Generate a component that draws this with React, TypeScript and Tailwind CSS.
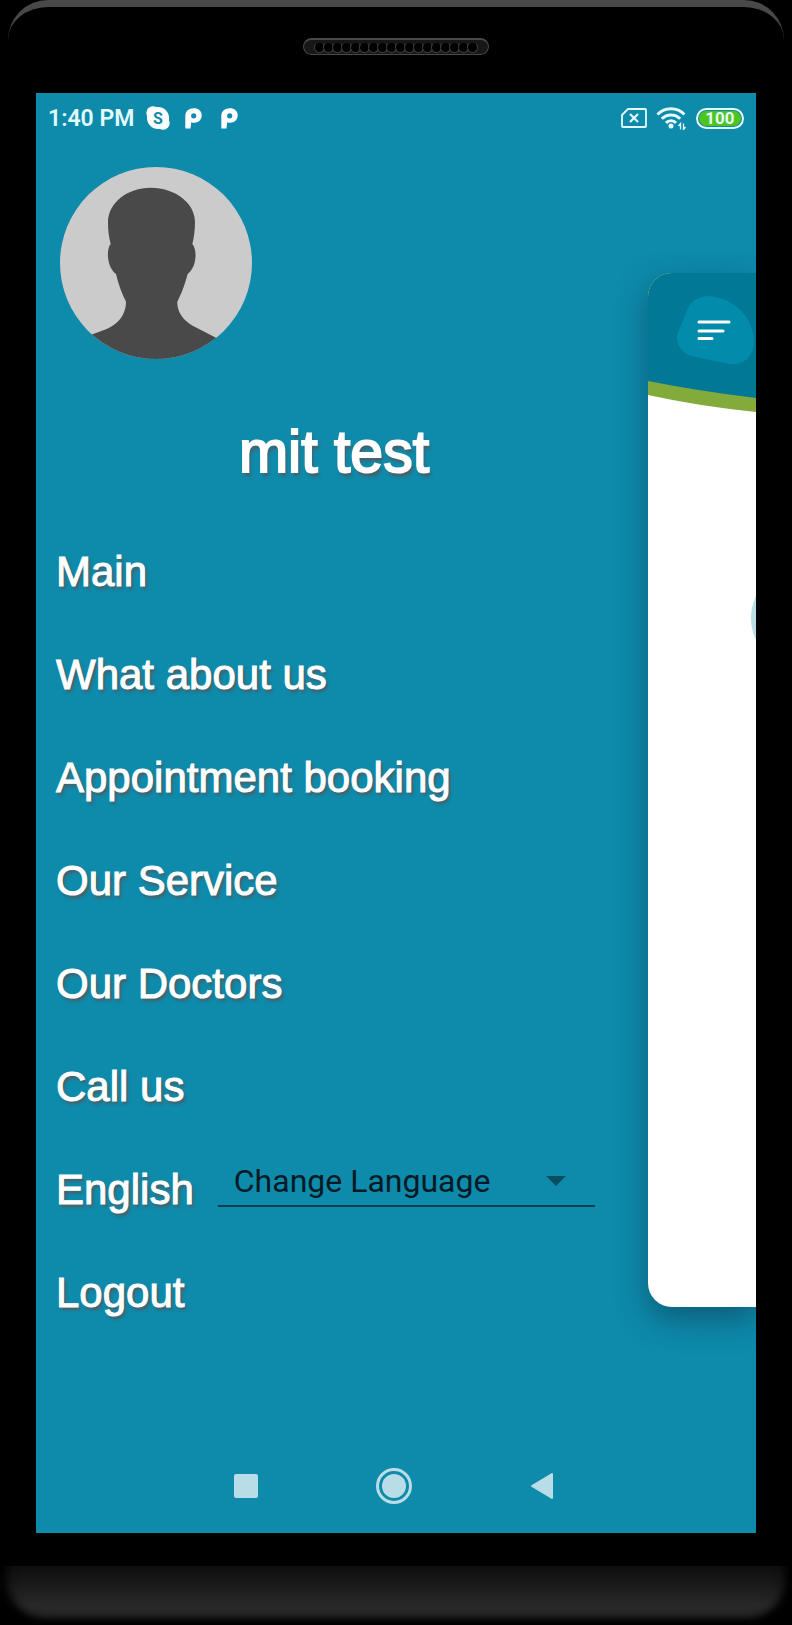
import { useState } from "react";

const MENU_TOP = [
  "Main",
  "What about us",
  "Appointment booking",
  "Our Service",
  "Our Doctors",
  "Call us",
];

const HOLES = Array.from({ length: 18 }, (_, i) => i);

const MENU_TEXT =
  "font-['Liberation_Sans',sans-serif] text-[42px] leading-[48px] text-white whitespace-nowrap [-webkit-text-stroke:1px_white] [text-shadow:2px_3px_3px_rgba(95,80,80,0.8)]";

function Speaker() {
  return (
    <div className="flex h-[17px] w-[186px] items-center justify-center rounded-full border border-t-2 border-[#484848] bg-[#171717]">
      {HOLES.map((i) => (
        <span key={i} className="-mx-px size-[11px] shrink-0 rounded-full border border-[#3c3c3c] border-t-[#1a1a1a] bg-black" />
      ))}
    </div>
  );
}

function SkypeIcon() {
  return (
    <svg viewBox="0 0 24 24" className="size-6" aria-hidden="true">
      <g fill="#fff">
        <circle cx="12" cy="12" r="11" />
        <circle cx="7" cy="7" r="6.700" />
        <circle cx="17" cy="17" r="6.700" />
      </g>
      <text x="12" y="17.500" textAnchor="middle" fill="#0e8aab" className="font-[Roboto,sans-serif] text-[16px] font-bold">
        S
      </text>
    </svg>
  );
}

function ParkingIcon() {
  return (
    <svg viewBox="0 0 17 21" className="h-[21px] w-[17px]" fill="none" aria-hidden="true">
      <path
        fill="#fff"
        fillRule="evenodd"
        d="M0.300 20.500V8.500C.3 3 4 .3 8.700.3c4.800 0 8 2.700 8 7 0 4.500-3.200 7.500-7.500 7.500-1.200 0-2.200-.2-3-.6L5.500 20.500ZM8.700 5.200a2.600 2.600 0 1 0 0 5.200 2.600 2.600 0 0 0 0-5.200Z"
      />
    </svg>
  );
}

function StatusBar() {
  return (
    <div className="flex h-[50px] items-center justify-between px-3 text-[#e3fbff]">
      <div className="flex items-center">
        <span className="w-[98px] pt-0.5 font-[Roboto,sans-serif] text-[23px] leading-7 font-semibold whitespace-nowrap">1:40 PM</span>
        <SkypeIcon />
        <div className="ml-[15px] flex gap-[19px]">
          <ParkingIcon />
          <ParkingIcon />
        </div>
      </div>

      <div className="flex items-center gap-[9px]">
        <svg viewBox="0 0 26 20" className="h-5 w-[26px]" fill="none" stroke="currentColor" strokeWidth="1.800" aria-hidden="true">
          <path d="M7 1H24a1 1 0 0 1 1 1V18a1 1 0 0 1-1 1H2a1 1 0 0 1-1-1V7Z" strokeLinejoin="round" />
          <path d="m9 6 8 8M17 6l-8 8" strokeWidth="2.200" />
        </svg>
        <svg viewBox="0 0 30 24" className="h-6 w-[30px]" fill="none" stroke="currentColor" strokeWidth="3" aria-hidden="true">
          <path d="M1.500 8.500C9 .8 21 .8 28.500 8.500M5.800 12.800c5.200-5.200 13.200-5.200 18.400 0M10 16.800c2.900-2.800 7.100-2.800 10 0" />
          <circle cx="15" cy="20" r="2.500" fill="currentColor" stroke="none" />
          <path d="M24.500 23.500v-6l-2 2.500M27.500 17.500v6l2-2.500" strokeWidth="1.300" />
        </svg>
        <div className="ml-px flex h-[21px] w-12 items-center justify-center rounded-full border-2 border-[#e3fbff] p-px">
          <span className="flex h-full w-full items-center justify-center rounded-full bg-[#4fc41d] font-[Roboto,sans-serif] text-[17px] leading-4 font-bold">
            100
          </span>
        </div>
      </div>
    </div>
  );
}

function Avatar() {
  return (
    <svg viewBox="0 0 576 576" className="ml-1 size-48 rounded-full bg-[#cbcbcb]" role="img" aria-label="Profile">
      <path
        fill="#494949"
        d="M272 62C202 62 144 108 144 166c0 26 3 46 8 65-13 14-13 68 16 90 8 32 17 58 30 83 0 32-16 58-45 75-17 10-36 15-55 23L0 560v16h576v-14L468 512l-70-36c-30-17-47-43-46-72 13-25 22-50 31-83 28-20 29-74 14-90 5-20 8-43 8-67 0-56-60-102-133-102Z"
      />
    </svg>
  );
}

function LanguageSelect() {
  const [lang, setLang] = useState("");

  return (
    <div className="relative mb-4 ml-6 w-[377px] border-b-2 border-[#073f50]">
      <select
        id="language"
        value={lang}
        onChange={(e) => setLang(e.target.value)}
        className="h-12 w-full appearance-none bg-transparent pl-4 font-[Roboto,sans-serif] text-[32px] leading-10 text-[#061a26] outline-none"
      >
        <option value="">Change Language</option>
        <option value="en">English</option>
        <option value="ar">Arabic</option>
      </select>
      <svg viewBox="0 0 20 10" className="pointer-events-none absolute top-[19px] right-[29px] h-2.5 w-5" aria-hidden="true">
        <path d="M0 0h20L10 10Z" fill="#084e62" />
      </svg>
    </div>
  );
}

/* Home page pushed to the right while the drawer is open */
function PagePreview() {
  return (
    <div className="mt-[130px] mb-[130px] w-[108px] shrink-0 overflow-hidden rounded-l-3xl bg-white shadow-[0_12px_30px_rgba(10,50,70,0.5)]">
      <div className="relative h-[140px]">
        <svg viewBox="0 0 108 140" className="block h-full w-full" aria-hidden="true">
          <path d="M0 0H108V139Q50 133 0 122Z" fill="#83ab3c" />
          <path d="M0 0H108V125Q50 118 0 108Z" fill="#007896" />
        </svg>
        <button type="button" aria-label="Open menu" className="absolute top-[23px] left-[29px]">
          <svg viewBox="0 0 77 69" className="h-[69px] w-[77px]">
            <path
              d="M11 12C15 3 24 0 32 0 56 2 76 20 77 45c0 15-10 25-25 23L14 60C4 56-1 48 0 39Z"
              fill="#028bab"
            />
            <path d="M22 26h30M22 35h24M22 42.500h13" stroke="#fff" strokeWidth="3" strokeLinecap="round" />
          </svg>
        </button>
      </div>
      <div className="mt-[154px] ml-[103px] size-[102px] rounded-full bg-[#b7dfe5]" />
    </div>
  );
}

function NavBar() {
  return (
    <nav className="flex h-24 items-center justify-center gap-28 pt-0.5 pr-1 text-[#b9dde6]" aria-label="System">
      <button type="button" aria-label="Recent apps" className="flex size-9 items-center justify-center">
        <span className="size-6 rounded-[2px] bg-current" />
      </button>
      <button type="button" aria-label="Home" className="flex size-9 items-center justify-center rounded-full border-[3px] border-current">
        <span className="size-6 rounded-full bg-current" />
      </button>
      <button type="button" aria-label="Back" className="flex size-9 items-center justify-center">
        <svg viewBox="0 0 24 28" className="h-7 w-6">
          <path d="M22 2v24L2 14Z" fill="currentColor" stroke="currentColor" strokeWidth="2" strokeLinejoin="round" />
        </svg>
      </button>
    </nav>
  );
}

export default function App() {
  return (
    <div className="min-h-screen w-full bg-black">
      <div className="px-2">
        <div className="flex h-[93px] justify-center rounded-t-[40px] border-t-[7px] border-[#484848] pt-[31px]">
          <Speaker />
        </div>
      </div>

      <div className="mx-9 overflow-hidden bg-[#0e8aab]">
        <StatusBar />
        <div className="flex">
          <div className="min-w-0 flex-1 pt-6 pr-4 pb-[93px] pl-5">
            <Avatar />
            <h1 className="-ml-5 pt-[57px] text-center font-['Liberation_Sans',sans-serif] text-[59px] leading-[72px] text-white [-webkit-text-stroke:2px_white] [text-shadow:2px_4px_3px_rgba(95,80,80,0.8)]">
              mit test
            </h1>
            <ul className="mt-8">
              {MENU_TOP.map((item) => (
                <li key={item} className="flex h-[103px] items-center">
                  <a href="#" className={MENU_TEXT}>
                    {item}
                  </a>
                </li>
              ))}
              <li className="flex h-[103px] items-center">
                <label htmlFor="language" className={MENU_TEXT}>
                  English
                </label>
                <LanguageSelect />
              </li>
              <li className="flex h-[103px] items-center">
                <button type="button" className={MENU_TEXT}>
                  Logout
                </button>
              </li>
            </ul>
          </div>
          <PagePreview />
        </div>
        <NavBar />
      </div>

      <div className="mt-[33px] flex h-[58px] items-end overflow-hidden">
        <div className="h-24 w-full shrink-0 rounded-b-[44px] bg-linear-to-b from-[#0e0e0e] from-40% via-[#282828] via-80% to-[#282828] shadow-[inset_6px_0_12px_#000,inset_-6px_0_12px_#000,inset_0_-4px_8px_#000]" />
      </div>
    </div>
  );
}
